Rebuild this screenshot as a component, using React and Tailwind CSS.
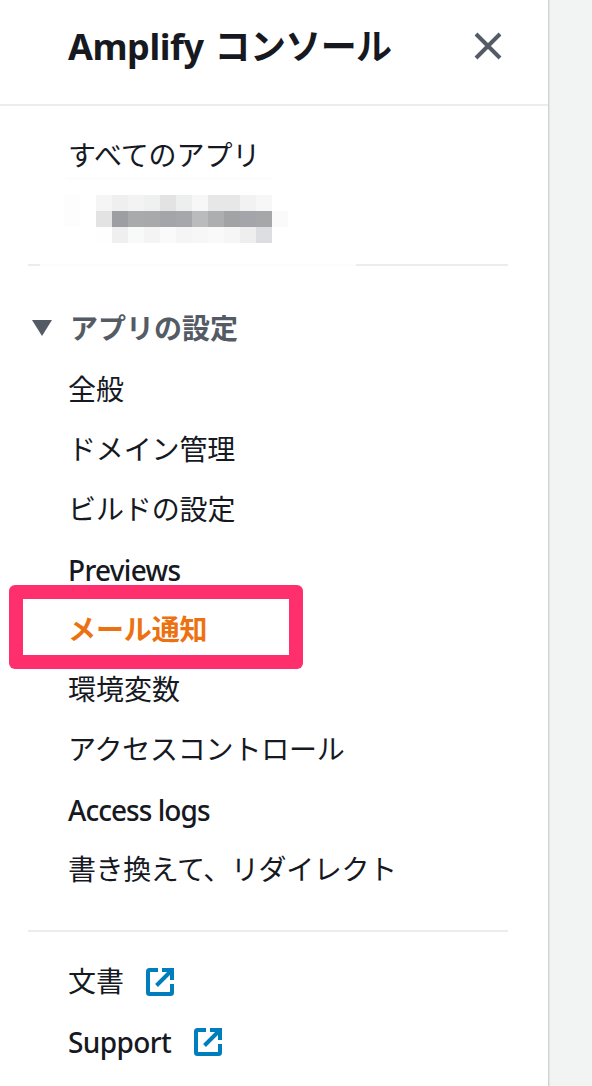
const nav = [
  { t: '全般' },
  { t: 'ドメイン管理', style: 'tracking-[-0.15px]' },
  { t: 'ビルドの設定', style: 'tracking-[-0.1px]' },
  { t: 'Previews', style: 'relative top-px font-medium tracking-[-0.7px]' },
  { t: 'メール通知', active: true },
  { t: '環境変数' },
  { t: 'アクセスコントロール', style: 'tracking-[-0.2px]' },
  { t: 'Access logs', style: 'relative top-px font-medium tracking-[-0.95px]' },
  { t: '書き換えて、リダイレクト', style: 'tracking-[-0.38px]' },
];

const mosaic = [
  '#f5f5f5', '#efeff0', '#f3f3f3', '#eff1f1', '#e3e3e3', '#edefef', '#f7f7f7', '#e7e7e7', '#e7e7e7', '#f2f2f2', '#f7f7f7',
  '#e3e3e3', '#9d9ea2', '#a9aaac', '#a8a9ab', '#a4a5a9', '#a6a7aa', '#babbbd', '#adaeb0', '#a2a3a5', '#a4a5aa', '#a6a7a9',
  '#fefefe', '#efeff0', '#f8faf9', '#f4f4f4', '#fafafa', '#f5f5f5', '#f7f7f7', '#f9f9f9', '#f6f6f6', '#eeeeee', '#dddee1',
];

function ExternalIcon() {
  return (
    <svg width="28" height="28" viewBox="0 0 28 28" fill="none" stroke="#007dbc" strokeWidth="4">
      <path d="M12 2H3.5Q2 2 2 3.5V24.5Q2 26 3.5 26H24.5Q26 26 26 24.5V16M16 2H26V12M25 3L10.5 17.5" />
    </svg>
  );
}

export default function App() {
  return (
    <div className="flex h-[1086px] w-[592px] overflow-hidden bg-[#f2f3f3] font-['Noto_Sans','Noto_Sans_CJK_JP',sans-serif] text-[28px] text-[#16191f]">
      <aside className="flex w-[549px] shrink-0 flex-col border-r border-[#ccd1d1] bg-white shadow-[1px_0_1px_#e4e7e7]">
        <header className="flex h-[106px] shrink-0 items-start justify-between border-b-2 border-[#eaeded] pr-[46px] pl-[68px]">
          <h1 className="mt-[22px] text-[36px] leading-[50px] font-bold whitespace-nowrap">
            <span className="tracking-[-0.45px]">Amplify </span><span className="ml-[2px] tracking-[-0.6px]">コンソール</span>
          </h1>
          <svg className="mt-[32px]" width="28" height="28" viewBox="0 0 28 28" fill="none" stroke="#545b64" strokeWidth="4">
            <path d="M2 2L26 26M26 2L2 26" />
          </svg>
        </header>
        <div className="h-[158px] shrink-0 pt-[29px]">
          <div className="pl-[68px] leading-[40px] tracking-[-0.1px]">すべてのアプリ</div>
          <div className="mt-[3px] ml-[66px] h-px w-[206px] bg-[#fafafa]" />
          <div className="mt-[16px] flex">
            <div className="ml-[64px] h-[32px] w-[16px] bg-[#fdfdfd]" />
            <div className="ml-[16px] grid w-[176px] grid-cols-11">
              {mosaic.map((color, i) => <div key={i} className="h-[16px]" style={{ backgroundColor: color }} />)}
            </div>
            <div className="mt-[16px] h-[16px] w-[16px] bg-[#fafafa]" />
          </div>
        </div>
        <div className="mr-[40px] ml-[28px] flex h-[2px] shrink-0">
          <div className="w-[12px] bg-[#eaeded]" />
          <div className="w-[316px] bg-[#fcfcfc]" />
          <div className="w-[152px] bg-[#eaeded]" />
        </div>
        <h2 className="mt-[41px] flex h-[40px] shrink-0 items-center pl-[32px] font-bold text-[#545b64]">
          <svg className="mt-[2px] mr-[18px]" width="20" height="16" viewBox="0 0 20 16" fill="#545b64">
            <path d="M0 0h20L10 16z" />
          </svg>
          <span className="pt-[2px]">アプリの設定</span>
        </h2>
        <ul className="mt-[12px] shrink-0 pl-[68px]">
          {nav.map((n) => (
            <li key={n.t} className="relative h-[60px] leading-[60px]">
              {n.active && (
                <div className="absolute top-[-14px] left-[-59.5px] h-[83.5px] w-[294.500px] rounded-[6px] bg-[#ff2f6d] p-[14px]">
                  <div className="h-full bg-white" />
                </div>
              )}
              <span className={n.active ? 'relative font-bold tracking-[-0.1px] text-[#ec7211]' : n.style}>{n.t}</span>
            </li>
          ))}
        </ul>
        <div className="mt-[31px] mr-[40px] ml-[28px] h-[2px] shrink-0 bg-[#eaeded]" />
        <div className="mt-[20px] flex h-[60px] shrink-0 items-center gap-[22px] pl-[68px]"><span className="-mt-[2px]">文書</span><ExternalIcon /></div>
        <div className="flex h-[60px] shrink-0 items-center gap-[22px] pl-[68px]"><span className="w-[104px] font-medium tracking-[-0.6px]">Support</span><ExternalIcon /></div>
      </aside>
    </div>
  );
}
